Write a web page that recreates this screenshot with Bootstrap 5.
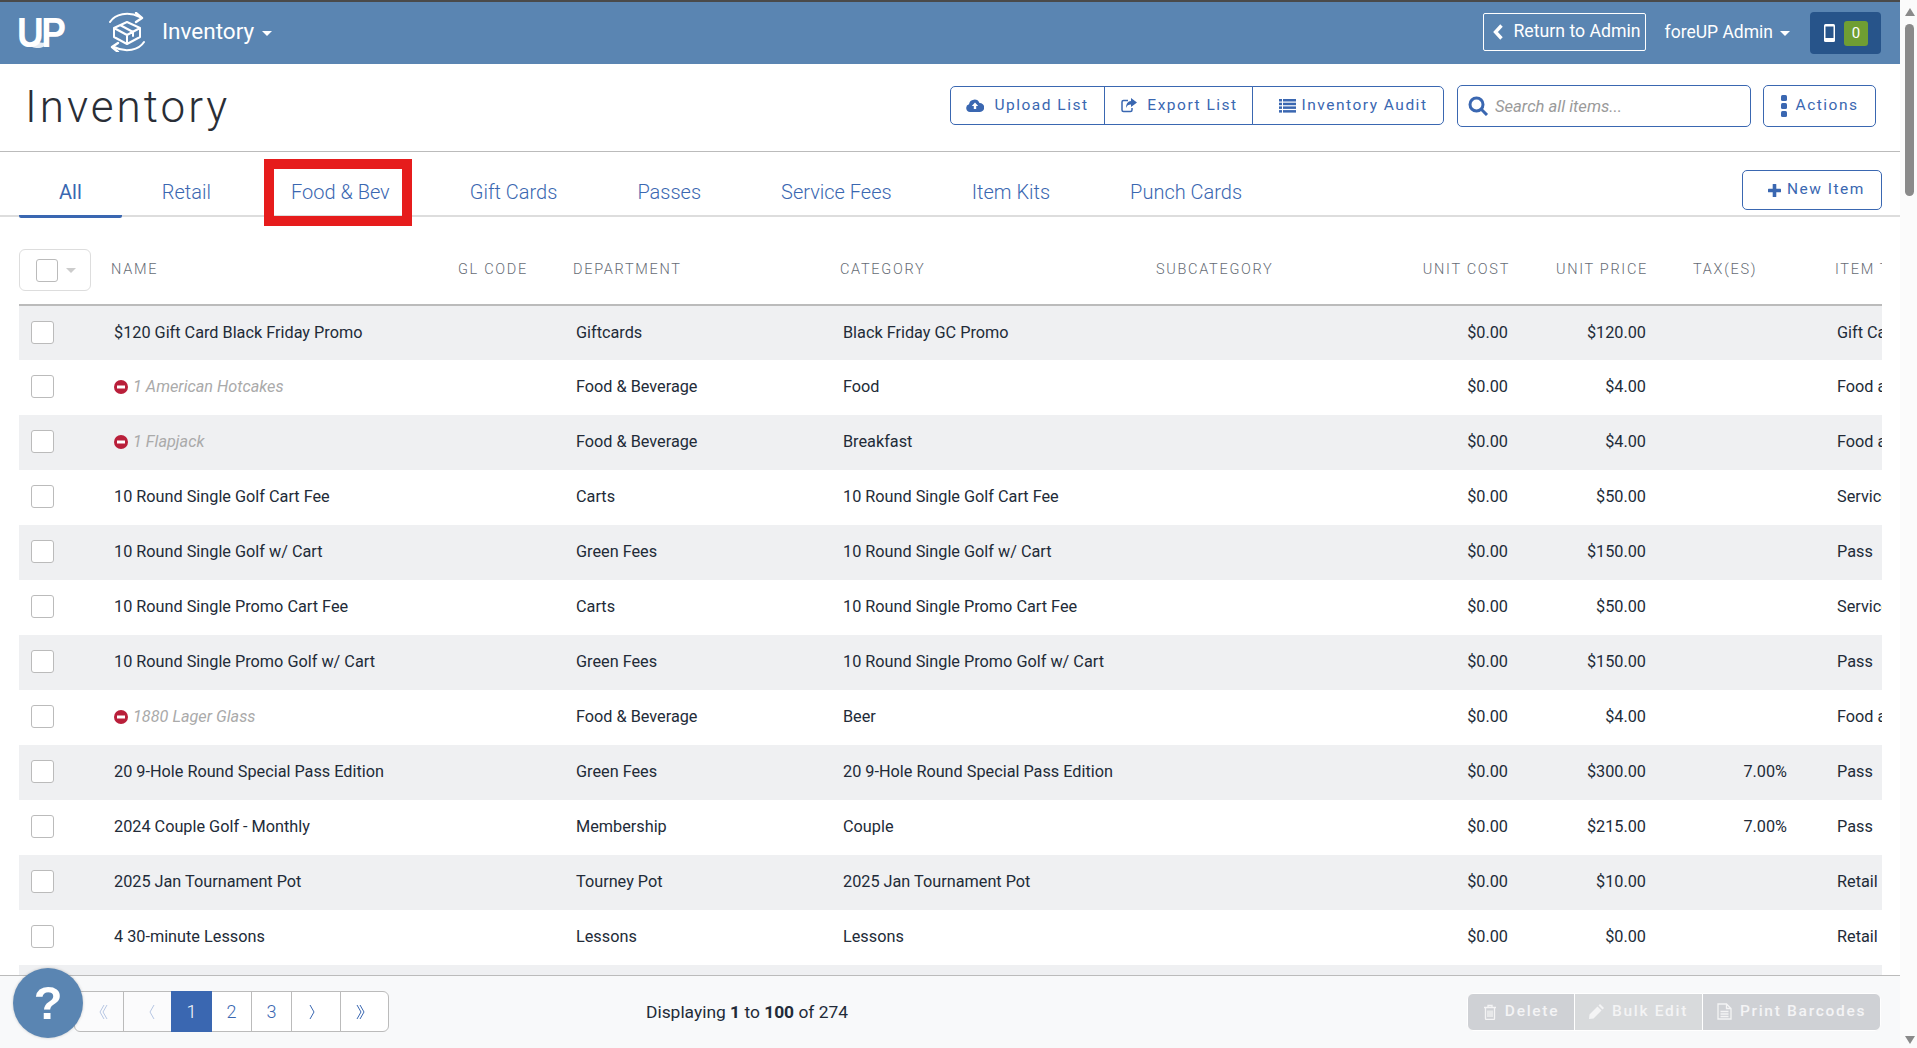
<!DOCTYPE html>
<html lang="en">
<head>
    <meta charset="UTF-8">
    <meta name="viewport" content="width=device-width, initial-scale=1.0">
    <title>Inventory</title>
    <link rel="stylesheet" href="https://cdn.jsdelivr.net/npm/bootstrap@5.3.0/dist/css/bootstrap.min.css">
    <style>
        html, body { height: 100%; overflow: hidden; }
        body { font-family: Roboto, "Liberation Sans", sans-serif; color: #222b38; background: #fff; }
        .app-shell { height: 100vh; min-width: 0; }
        .fake-scroll { width: 17px; background: #fbfbfb; padding: 8px 4px 4px 5px; }
        .fake-scroll .arrow-up { width: 0; height: 0; border: 5px solid transparent; border-top: 0; border-bottom: 8px solid #8a8a8a; }
        .fake-scroll .arrow-down { width: 0; height: 0; border: 5px solid transparent; border-bottom: 0; border-top: 8px solid #8a8a8a; }
        .fake-scroll .thumb { width: 9px; height: 172px; margin-top: 8px; border-radius: 5px; background: #8a8a8a; }

        .top-bar { height: 64px; flex: none; background: #5a85b2; border-top: 2px solid #4a4a4a; color: #fff; padding: 0 19px 2px; }
        .up-logo { width: 49px; margin-left: -2px; font: bold 43px/1 "Liberation Sans", sans-serif; letter-spacing: -3px; position: relative; transform: scaleX(.86); transform-origin: left center; }
        .up-logo svg { position: absolute; left: 12px; top: 30px; }
        .box-logo { margin-left: 42px; margin-right: 16px; }
        .module-link { font-size: 22.5px; font-weight: 400; color: #fff; text-decoration: none; }
        .module-link.dropdown-toggle::after { margin-left: 8px; vertical-align: 3px; border-top-width: 5px; border-left-width: 5px; border-right-width: 5px; }
        .admin-back { width: 163px; height: 38px; border: 1px solid #fff; border-radius: 2px; color: #fff; font-size: 17.7px; padding: 0 4px 0 9px; margin-top: -1px; text-decoration: none; white-space: nowrap; justify-content: space-between; }
        .admin-link { font-size: 17.5px; margin-left: 19px; margin-right: 20px; color: #fff; text-decoration: none; }
        .admin-link.dropdown-toggle::after { margin-left: 7px; vertical-align: 2px; border-top-width: 5px; border-left-width: 5px; border-right-width: 5px; }
        .reg-box { width: 71px; height: 42px; background: #27548a; border-radius: 4px; padding-left: 14px; gap: 9px; margin-top: 2px; }
        .reg-count { width: 24px; height: 25px; background: #6f9e33; border-radius: 3px; font-size: 15px; line-height: 25px; text-align: center; }

        .title-row { height: 88px; flex: none; border-bottom: 1px solid #bbb; padding: 0 24px 4px 25px; }
        .page-title { font-size: 44px; font-weight: 300; letter-spacing: 3px; margin: 3px 0 0 0; color: #2a2e36; }
        .fu-btn { --bs-btn-color: #3a67b1; --bs-btn-border-color: #3a67b1; --bs-btn-hover-color: #3a67b1; --bs-btn-hover-bg: #eef2f9; --bs-btn-hover-border-color: #3a67b1; --bs-btn-font-size: 15.5px; letter-spacing: 1.5px; border-radius: 5px; height: 39px; padding: 0; display: inline-flex; align-items: center; justify-content: center; font-weight: 400; background: #fff; }
        .btn-upload { width: 155px; gap: 10px; }
        .btn-export { width: 149px; gap: 10px; padding-left: 2px; }
        .btn-audit { width: 192px; gap: 6px; padding-left: 10px; }
        .search-box { width: 294px; height: 42px; border: 1px solid #3a67b1; border-radius: 5px; padding: 0 10px; margin-left: 13px; gap: 6px; }
        .search-box input { border: 0; outline: 0; min-width: 0; width: 100%; padding: 3px 0 0; font-size: 16.6px; font-style: italic; }
        .search-box input::placeholder { color: #9a9a9a; }
        .btn-actions { width: 113px; height: 42px; margin-left: 12px; gap: 9px; }

        .tab-row { height: 65px; flex: none; border-bottom: 2px solid #ddd; padding: 0 18px 0 19px; }
        .tab-link { display: block; height: 66px; margin-bottom: -3px; padding: 28px 40px 0; border-bottom: 3px solid transparent; font-size: 20px; line-height: 24px; font-weight: 300; color: #3a67b1; text-decoration: none; position: relative; white-space: nowrap; }
        .tab-link.tab-on { border-bottom-color: #3a67b1; border-radius: 0 0 2px 2px; font-weight: 400; }
        .tab-mark { position: absolute; left: 13px; right: 18px; top: 7px; bottom: -11px; border: 10px solid #e61c1c; }
        .btn-new { width: 140px; height: 40px; margin-bottom: 5px; gap: 6px; padding-left: 9px; }

        .list-area { flex: 1 1 0; min-height: 0; overflow: hidden; margin: 0 18px 0 19px; }
        .item-table { table-layout: fixed; width: 2006px; margin: 0; --bs-table-striped-bg: #eff0f2; --bs-table-bg: #fff; --bs-table-color: #222b38; --bs-table-striped-color: #222b38; font-size: 16.25px; }
        .item-table th { height: 88px; padding: 19px 10px 0 9px; vertical-align: middle; font-size: 14.5px; font-weight: 300; letter-spacing: 1.7px; color: #666c75; text-transform: uppercase; border-bottom: 2px solid #bbb; white-space: nowrap; }
        .item-table td { height: 55px; padding: 0 12px; vertical-align: middle; white-space: nowrap; overflow: hidden; }
        .item-table th.tax-head { padding-left: 35px; }
        .item-table td.tax-cell { padding-right: 38px; }
        .item-table th.type-head { padding-left: 10px; }
        .fake-check { display: block; width: 23px; height: 23px; background: #fff; border: 1px solid #bbb; border-radius: 3px; margin: -2px 0 0 0; }
        .check-menu { width: 72px; height: 42px; border: 1px solid #ddd; border-radius: 6px; padding-left: 16px; margin-left: -9px; gap: 8px; }
        .check-menu .fake-check { margin: 0; width: 22px; height: 23px; }
        .check-menu i { width: 0; height: 0; border: 5px solid transparent; border-top: 5px solid #ccc; border-bottom: 0; }
        .off-name { color: #aaa; font-style: italic; }
        .off-name svg { margin: -2px 5px 0 0; vertical-align: middle; }

        .foot-bar { height: 73px; flex: none; background: #f8f9fa; border-top: 1px solid #bbb; padding: 0 19px 0 74px; }
        .foot-pages { margin: -1px 0 0; --bs-pagination-color: #3a67b1; --bs-pagination-border-color: #bbb; --bs-pagination-active-bg: #3a67b1; --bs-pagination-active-border-color: #3a67b1; --bs-pagination-disabled-color: #b6c6e3; --bs-pagination-disabled-bg: #fbfbfc; --bs-pagination-disabled-border-color: #bbb; --bs-pagination-font-size: 18px; font-weight: 300; }
        .foot-pages .page-link { height: 41px; padding: 0; display: flex; align-items: center; justify-content: center; }
        .pg-edge .page-link { width: 49.5px; }
        .pg-num .page-link { width: 41px; }
        .pg-back .page-link { padding-left: 10px; }
        .pg-fwd .page-link { padding-right: 8px; }
        .foot-count { margin-left: 257px; font-size: 17.4px; }
        .foot-actions { height: 38px; margin-top: -1px; }
        .foot-actions .btn { --bs-btn-disabled-bg: #cfd1d5; --bs-btn-disabled-border-color: #cfd1d5; --bs-btn-disabled-color: #f4f4f5; --bs-btn-disabled-opacity: 1; --bs-btn-font-size: 15.5px; letter-spacing: 1.7px; font-weight: 500; padding: 0; display: inline-flex; align-items: center; justify-content: center; gap: 8px; border-color: #fff; }
        .foot-actions .btn-del { width: 108px; }
        .foot-actions .btn-bulk { width: 129px; --bs-btn-disabled-bg: #d8dadc; --bs-btn-disabled-border-color: #d8dadc; }
        .foot-actions .btn-print { width: 179px; }
        .help-dot { position: fixed; left: 13px; top: 968px; width: 70px; height: 70px; border-radius: 50%; background: #5a85b2; color: #fff; font-size: 47px; font-weight: 700; line-height: 70px; text-align: center; font-family: "Liberation Sans", sans-serif; box-shadow: 0 0 3px rgba(0,0,0,.2); }
    </style>
</head>
<body class="d-flex">
    <div class="app-shell d-flex flex-column flex-grow-1">

        <nav class="top-bar d-flex align-items-center">
            <span class="up-logo">UP
                <svg width="24" height="8" viewBox="0 0 24 8"><path d="M0 1c3 5 8 6 12 6 5 0 10-2 12-6-5 1-8 1-11 0-3 2-8 2-13 0z" fill="#fff" opacity=".85"/></svg>
            </span>
            <svg class="box-logo" width="38" height="40" viewBox="0 0 38 40" fill="none" stroke="#fff" stroke-width="2" stroke-linejoin="round" stroke-linecap="round">
                <path d="M2 10C7 2 20-1 32 5"/><path d="M28 1l6 5-6 4" stroke-width="2.4"/>
                <path d="M36 30C31 38 18 41 6 35"/><path d="M10 31l-6 4 6 5" stroke-width="2.4"/>
                <path d="M19 10l13 6v9l-13 7-13-7v-9zM6 16l13 7 13-7M19 23v9M12 13l13 7v4"/>
            </svg>
            <a class="module-link dropdown-toggle" href="#">Inventory</a>
            <a class="admin-back d-flex align-items-center ms-auto" href="#">
                <svg width="10" height="16" viewBox="0 0 10 16" fill="none" stroke="#fff" stroke-width="3.4"><path d="M8.5 1.5L2.5 8l6 6.5"/></svg>
                Return to Admin
            </a>
            <a class="admin-link dropdown-toggle" href="#">foreUP Admin</a>
            <div class="reg-box d-flex align-items-center">
                <svg width="11" height="18" viewBox="0 0 11 18"><rect width="11" height="18" rx="1.5" fill="#fff"/><rect x="1.5" y="2.5" width="8" height="11.5" fill="#27548a"/></svg>
                <span class="reg-count">0</span>
            </div>
        </nav>

        <div class="title-row d-flex align-items-center">
            <h1 class="page-title me-auto">Inventory</h1>
            <div class="btn-group">
                <button class="btn fu-btn btn-upload">
                    <svg width="18" height="13" viewBox="0 0 18 13"><path d="M4 13a4 4 0 0 1-1-7.8A5.5 5.5 0 0 1 13.5 4 4.5 4.5 0 0 1 14 13z" fill="#3a67b1"/><path d="M9 3.5L5.8 7h2v3h2.4V7h2z" fill="#fff"/></svg>
                    Upload List
                </button>
                <button class="btn fu-btn btn-export">
                    <svg width="16" height="15" viewBox="0 0 16 15" fill="none" stroke="#3a67b1"><path d="M7 2.5H2.5a1.5 1.5 0 0 0-1.500 1.500v8A1.500 1.500 0 0 0 2.500 13.500h7a1.500 1.500 0 0 0 1.500-1.500v-2" stroke-width="1.500"/><path d="M10 0l6 4.500-6 4.500V6.500C7.500 6.500 5.800 7.500 5 10 5 6 7 3 10 3z" fill="#3a67b1" stroke="none"/></svg>
                    Export List
                </button>
                <button class="btn fu-btn btn-audit">
                    <svg width="17" height="14" viewBox="0 0 17 14" fill="#3a67b1"><rect width="3" height="2.500"/><rect x="4" width="13" height="2.500"/><rect y="3.700" width="3" height="2.500"/><rect x="4" y="3.700" width="13" height="2.500"/><rect y="7.400" width="3" height="2.500"/><rect x="4" y="7.400" width="13" height="2.500"/><rect y="11.100" width="3" height="2.500"/><rect x="4" y="11.100" width="13" height="2.500"/></svg>
                    Inventory Audit
                </button>
            </div>
            <div class="search-box d-flex align-items-center">
                <svg class="flex-shrink-0" width="21" height="20" viewBox="0 0 21 20" fill="none" stroke="#3a67b1"><circle cx="8.500" cy="8.500" r="6.500" stroke-width="3"/><path d="M13.500 13.500L19 19" stroke-width="3"/></svg>
                <input type="text" placeholder="Search all items..." aria-label="Search all items">
            </div>
            <button class="btn fu-btn btn-actions">
                <svg width="6" height="22" viewBox="0 0 6 22" fill="#3a67b1"><rect width="6" height="6" rx="1.500"/><rect y="8" width="6" height="6" rx="1.500"/><rect y="16" width="6" height="6" rx="1.500"/></svg>
                Actions
            </button>
        </div>

        <div class="tab-row d-flex align-items-end">
            <a class="tab-link tab-on" href="#">All</a>
            <a class="tab-link" href="#">Retail</a>
            <a class="tab-link" href="#">Food &amp; Bev<span class="tab-mark"></span></a>
            <a class="tab-link" href="#">Gift Cards</a>
            <a class="tab-link" href="#">Passes</a>
            <a class="tab-link" href="#">Service Fees</a>
            <a class="tab-link" href="#">Item Kits</a>
            <a class="tab-link" href="#">Punch Cards</a>
            <button class="btn fu-btn btn-new ms-auto">
                <svg width="13" height="13" viewBox="0 0 13 13" fill="#3a67b1"><rect x="4.700" width="3.600" height="13" rx=".6"/><rect y="4.700" width="13" height="3.600" rx=".6"/></svg>
                New Item
            </button>
        </div>

        <div class="list-area">
            <table class="table table-striped table-borderless item-table">
                <colgroup>
                    <col style="width:83px"><col style="width:347px"><col style="width:115px"><col style="width:267px"><col style="width:316px"><col style="width:223px"><col style="width:150px"><col style="width:138px"><col style="width:167px"><col style="width:200px">
                </colgroup>
                <thead>
                    <tr>
                        <th><div class="check-menu d-flex align-items-center"><span class="fake-check"></span><i></i></div></th>
                        <th>Name</th>
                        <th>GL Code</th>
                        <th>Department</th>
                        <th>Category</th>
                        <th>Subcategory</th>
                        <th class="text-end">Unit Cost</th>
                        <th class="text-end">Unit Price</th>
                        <th class="tax-head">Tax(es)</th>
                        <th class="type-head">Item Type</th>
                    </tr>
                </thead>
                <tbody id="rows"></tbody>
            </table>
        </div>

        <footer class="foot-bar d-flex align-items-center">
            <ul class="pagination foot-pages">
                <li class="page-item disabled pg-edge pg-back"><a class="page-link" href="#"><svg width="9" height="16" viewBox="0 0 9 16" fill="none" stroke="currentColor"><path d="M5 1L1 8l4 7M8 1L4 8l4 7"/></svg></a></li>
                <li class="page-item disabled pg-edge pg-back"><a class="page-link" href="#"><svg width="6" height="16" viewBox="0 0 6 16" fill="none" stroke="currentColor"><path d="M5 1L1 8l4 7"/></svg></a></li>
                <li class="page-item active pg-num"><a class="page-link" href="#">1</a></li>
                <li class="page-item pg-num"><a class="page-link" href="#">2</a></li>
                <li class="page-item pg-num"><a class="page-link" href="#">3</a></li>
                <li class="page-item pg-edge pg-fwd"><a class="page-link" href="#"><svg width="6" height="16" viewBox="0 0 6 16" fill="none" stroke="currentColor"><path d="M1 1l4 7-4 7"/></svg></a></li>
                <li class="page-item pg-edge pg-fwd"><a class="page-link" href="#"><svg width="9" height="16" viewBox="0 0 9 16" fill="none" stroke="currentColor"><path d="M1 1l4 7-4 7M4 1l4 7-4 7"/></svg></a></li>
            </ul>
            <div class="foot-count">Displaying <b>1</b> to <b>100</b> of 274</div>
            <div class="btn-group foot-actions ms-auto">
                <button class="btn btn-del" disabled>
                    <svg width="14" height="16" viewBox="0 0 14 16" fill="none" stroke="#f4f4f5" stroke-width="1.300"><path d="M1 3.500h12M5 3V1.500h4V3M2.500 4v10.500a1 1 0 0 0 1 1h7a1 1 0 0 0 1-1V4M5 6.500v6.500M7 6.500v6.500M9 6.500v6.500"/></svg>
                    Delete
                </button>
                <button class="btn btn-bulk" disabled>
                    <svg width="15" height="15" viewBox="0 0 15 15" fill="#f4f4f5"><path d="M11 0l4 4-1.500 1.500-4-4zM8.500 2.500l4 4L4.500 14.500 0 15l.5-4.500z"/></svg>
                    Bulk Edit
                </button>
                <button class="btn btn-print" disabled>
                    <svg width="15" height="17" viewBox="0 0 15 17" fill="none" stroke="#f4f4f5" stroke-width="1.300"><path d="M1 1h8.500L14 5.500V16H1zM9.500 1v4.500H14M3.500 8.500h8M3.500 11h8M3.500 13.500h8"/></svg>
                    Print Barcodes
                </button>
            </div>
        </footer>
    </div>

    <aside class="fake-scroll d-flex flex-column">
        <div class="arrow-up"></div>
        <div class="thumb"></div>
        <div class="arrow-down mt-auto"></div>
    </aside>

    <div class="help-dot">?</div>

    <script src="https://cdn.jsdelivr.net/npm/bootstrap@5.3.0/dist/js/bootstrap.bundle.min.js"></script>
    <script>
        // name, off, department, category, cost, price, tax, type
        let items = [
            ["$120 Gift Card Black Friday Promo", false, "Giftcards", "Black Friday GC Promo", "$0.00", "$120.00", "", "Gift Card"],
            ["1 American Hotcakes", true, "Food & Beverage", "Food", "$0.00", "$4.00", "", "Food and Beverage"],
            ["1 Flapjack", true, "Food & Beverage", "Breakfast", "$0.00", "$4.00", "", "Food and Beverage"],
            ["10 Round Single Golf Cart Fee", false, "Carts", "10 Round Single Golf Cart Fee", "$0.00", "$50.00", "", "Service Fee"],
            ["10 Round Single Golf w/ Cart", false, "Green Fees", "10 Round Single Golf w/ Cart", "$0.00", "$150.00", "", "Pass"],
            ["10 Round Single Promo Cart Fee", false, "Carts", "10 Round Single Promo Cart Fee", "$0.00", "$50.00", "", "Service Fee"],
            ["10 Round Single Promo Golf w/ Cart", false, "Green Fees", "10 Round Single Promo Golf w/ Cart", "$0.00", "$150.00", "", "Pass"],
            ["1880 Lager Glass", true, "Food & Beverage", "Beer", "$0.00", "$4.00", "", "Food and Beverage"],
            ["20 9-Hole Round Special Pass Edition", false, "Green Fees", "20 9-Hole Round Special Pass Edition", "$0.00", "$300.00", "7.00%", "Pass"],
            ["2024 Couple Golf - Monthly", false, "Membership", "Couple", "$0.00", "$215.00", "7.00%", "Pass"],
            ["2025 Jan Tournament Pot", false, "Tourney Pot", "2025 Jan Tournament Pot", "$0.00", "$10.00", "", "Retail"],
            ["4 30-minute Lessons", false, "Lessons", "Lessons", "$0.00", "$0.00", "", "Retail"],
            ["", false, "", "", "", "", "", ""]
        ];
        let offIcon = '<svg width="14" height="14" viewBox="0 0 14 14"><circle cx="7" cy="7" r="7" fill="#b91f3a"/><rect x="3" y="5.500" width="8" height="3" fill="#fff"/></svg>';
        let html = "";
        items.forEach(row => {
            let name = row[1] ? `<span class="off-name">${offIcon}${row[0]}</span>` : row[0];
            html += `<tr>
                <td class="pe-0"><span class="fake-check"></span></td>
                <td>${name}</td><td></td>
                <td>${row[2].replace("&", "&amp;")}</td><td>${row[3]}</td><td></td>
                <td class="text-end">${row[4]}</td><td class="text-end">${row[5]}</td>
                <td class="text-end tax-cell">${row[6]}</td><td>${row[7]}</td>
            </tr>`;
        });
        document.getElementById("rows").innerHTML = html;
    </script>
</body>
</html>
